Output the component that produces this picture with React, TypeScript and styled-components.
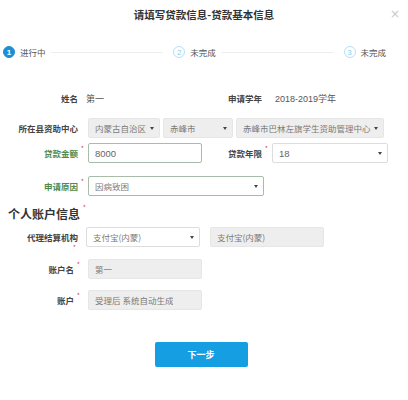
import React from "react";
import styled, { createGlobalStyle } from "styled-components";

const Global = createGlobalStyle`
  html, body { margin: 0; padding: 0; background: #fff; }
  body { font-family: "Noto Sans CJK SC", "Noto Sans", sans-serif; color: #333; }
  * { box-sizing: border-box; }
`;

const Page = styled.div`
  width: 408px;
  height: 400px;
  position: relative;
  background: #fff;
  overflow: hidden;
`;

const Header = styled.div`
  height: 28px;
  display: flex;
  align-items: center;
  justify-content: center;
  font-size: 10.5px;
  font-weight: 700;
  color: #333;
`;

const Close = styled.span`
  position: absolute;
  right: 8px;
  top: 7px;
  font-size: 12px;
  color: #c8c8c8;
  font-family: "DejaVu Sans", sans-serif;
`;

const Steps = styled.div`
  display: flex;
  align-items: center;
  height: 16px;
  margin-top: 16px;
  padding: 0 22px 0 3px;
`;

const Step = styled.div`
  display: flex;
  align-items: center;
  gap: 5px;
  font-size: 8.5px;
  color: #555;
`;

const Circle = styled.span<{ $active?: boolean }>`
  width: 12px;
  height: 12px;
  border-radius: 50%;
  display: flex;
  align-items: center;
  justify-content: center;
  font-family: "Liberation Sans", sans-serif;
  font-size: 8px;
  font-weight: ${(p) => (p.$active ? 700 : 400)};
  background: ${(p) => (p.$active ? "#1a8fd8" : "#fff")};
  color: ${(p) => (p.$active ? "#fff" : "#8ccbea")};
  border: 1px solid ${(p) => (p.$active ? "#1a8fd8" : "#b6dff3")};
`;

const Line = styled.span`
  flex: 1;
  height: 1px;
  background: #eeeeee;
  margin: 0 10px 0 5px;
`;

const Form = styled.div`
  display: flex;
  flex-direction: column;
  margin-top: 28px;
`;

const Row = styled.div<{ $mt?: number }>`
  display: flex;
  align-items: center;
  height: 20px;
  margin-top: ${(p) => p.$mt ?? 0}px;
`;

const Label = styled.div<{ $green?: boolean; $w?: number }>`
  width: ${(p) => p.$w ?? 78}px;
  flex: none;
  text-align: right;
  font-size: 8.5px;
  line-height: 12px;
  font-weight: 700;
  color: ${(p) => (p.$green ? "#4e8a4e" : "#444")};
  position: relative;
  white-space: nowrap;
`;

const Star = styled.span<{ $below?: boolean }>`
  position: absolute;
  color: #e24b4b;
  font-size: 7px;
  line-height: 7px;
  font-weight: 400;
  ${(p) => (p.$below ? "right: 2px; top: 13px;" : "right: -6px; top: -2px;")}
`;

const Value = styled.div<{ $ml?: number }>`
  font-size: 9px;
  color: #555;
  margin-left: ${(p) => p.$ml ?? 8}px;
  font-family: "Liberation Sans", "Noto Sans CJK SC", sans-serif;
`;

const Field = styled.div<{
  $w: number;
  $ml?: number;
  $gray?: boolean;
  $border?: string;
}>`
  width: ${(p) => p.$w}px;
  height: 20px;
  margin-left: ${(p) => p.$ml ?? 10}px;
  flex: none;
  display: flex;
  align-items: center;
  justify-content: space-between;
  padding: 0 5px 0 6px;
  border: 1px solid ${(p) => p.$border ?? (p.$gray ? "#e6e6e6" : "#dddddd")};
  border-radius: 2px;
  background: ${(p) => (p.$gray ? "#eeeeee" : "#fff")};
  font-size: 8.5px;
  color: #777;
  white-space: nowrap;
  overflow: hidden;
`;

const FieldText = styled.span<{ $num?: boolean }>`
  font-family: ${(p) =>
    p.$num ? '"Liberation Sans", sans-serif' : '"Noto Sans CJK SC", sans-serif'};
  font-size: ${(p) => (p.$num ? "9.5px" : "8.5px")};
  color: ${(p) => (p.$num ? "#666" : "#7a7a7a")};
  overflow: hidden;
`;

const Arrow = styled.span`
  width: 0;
  height: 0;
  flex: none;
  margin-left: 3px;
  border-left: 2px solid transparent;
  border-right: 2px solid transparent;
  border-top: 3px solid #444;
`;

const Heading = styled.div`
  margin: 11px 0 0 8px;
  font-size: 12px;
  font-weight: 700;
  color: #333;
  position: relative;
  align-self: flex-start;
  height: 14px;
  line-height: 14px;
`;

const HeadStar = styled.span`
  position: absolute;
  right: -6px;
  top: -3px;
  color: #e24b4b;
  font-size: 7px;
  line-height: 7px;
  font-weight: 400;
`;

const ButtonRow = styled.div`
  display: flex;
  justify-content: center;
  margin-top: 32px;
  padding-right: 6px;
`;

const Button = styled.button`
  width: 93px;
  height: 25px;
  border: none;
  border-radius: 2px;
  background: #169ee2;
  color: #fff;
  font-family: "Noto Sans CJK SC", sans-serif;
  font-size: 9px;
  font-weight: 700;
`;

const Select: React.FC<{
  w: number;
  ml?: number;
  gray?: boolean;
  border?: string;
  num?: boolean;
  children: React.ReactNode;
}> = ({ w, ml, gray, border, num, children }) => (
  <Field $w={w} $ml={ml} $gray={gray} $border={border}>
    <FieldText $num={num}>{children}</FieldText>
    <Arrow />
  </Field>
);

export default function App() {
  return (
    <Page>
      <Global />
      <Header>请填写贷款信息-贷款基本信息</Header>
      <Close>×</Close>
      <Steps>
        <Step>
          <Circle $active>1</Circle>
          进行中
        </Step>
        <Line />
        <Step>
          <Circle>2</Circle>
          未完成
        </Step>
        <Line />
        <Step>
          <Circle>3</Circle>
          未完成
        </Step>
      </Steps>

      <Form>
        <Row>
          <Label>姓名</Label>
          <Value>第一</Value>
          <Label $w={158}>申请学年</Label>
          <Value $ml={13}>2018-2019学年</Value>
        </Row>
        <Row $mt={10}>
          <Label>所在县资助中心</Label>
          <Select w={72} gray>
            内蒙古自治区
          </Select>
          <Select w={70} ml={3} gray>
            赤峰市
          </Select>
          <Select w={148} ml={3} gray>
            赤峰市巴林左旗学生资助管理中心
          </Select>
        </Row>
        <Row $mt={5}>
          <Label $green>
            贷款金额<Star>*</Star>
          </Label>
          <Field $w={114} $border="#a9bca9">
            <FieldText $num>8000</FieldText>
          </Field>
          <Label $w={60}>
            贷款年限<Star>*</Star>
          </Label>
          <Select w={116} num>
            18
          </Select>
        </Row>
        <Row $mt={13}>
          <Label $green>
            申请原因<Star>*</Star>
          </Label>
          <Select w={176} border="#a9bca9">
            因病致困
          </Select>
        </Row>

        <Heading>
          个人账户信息<HeadStar>*</HeadStar>
        </Heading>

        <Row $mt={6}>
          <Label>
            代理结算机构<Star $below>*</Star>
          </Label>
          <Select w={114} ml={8}>
            支付宝(内蒙)
          </Select>
          <Field $w={114} $gray>
            <FieldText>支付宝(内蒙)</FieldText>
          </Field>
        </Row>
        <Row $mt={12}>
          <Label $w={74}>
            账户名<Star>*</Star>
          </Label>
          <Field $w={114} $ml={14} $gray>
            <FieldText>第一</FieldText>
          </Field>
        </Row>
        <Row $mt={11}>
          <Label $w={74}>
            账户<Star>*</Star>
          </Label>
          <Field $w={114} $ml={14} $gray>
            <FieldText>受理后 系统自动生成</FieldText>
          </Field>
        </Row>

        <ButtonRow>
          <Button>下一步</Button>
        </ButtonRow>
      </Form>
    </Page>
  );
}
